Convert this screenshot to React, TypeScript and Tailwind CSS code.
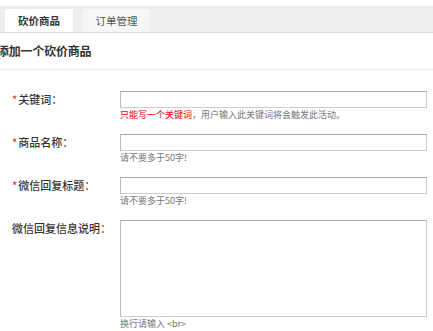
import React from "react";

const font = { fontFamily: '"Noto Sans CJK SC", "Noto Sans", sans-serif' };

function Row({
  label,
  required,
  hint,
  tall,
}: {
  label: string;
  required?: boolean;
  hint: React.ReactNode;
  tall?: boolean;
}) {
  return (
    <div className="flex mb-[13px]">
      <div className="w-[120px] shrink-0 h-[17px] flex items-center pl-[12px] text-[11px] text-[#333] font-medium">
        {required && <span className="text-[#e33] mr-[1px]">*</span>}
        {label}
      </div>
      <div className="w-[307px] flex flex-col">
        {tall ? (
          <textarea className="w-full h-[97px] border border-[#ccc] border-t-[#aaa] border-l-[#bbb] bg-white resize-none outline-none" />
        ) : (
          <input className="w-full h-[17px] border border-[#ccc] border-t-[#aaa] border-l-[#bbb] bg-white outline-none" />
        )}
        <div className="h-[12px] leading-[12px] text-[9px] text-[#777] mt-[1px] whitespace-nowrap">
          {hint}
        </div>
      </div>
    </div>
  );
}

export default function App() {
  return (
    <div className="w-[433px] h-[331px] bg-white overflow-hidden pt-[6px]" style={font}>
      <div className="h-[27px] bg-[#eee] border-b border-[#ddd] flex items-end pl-[5px] gap-[10px]">
        <div className="w-[68px] h-[23px] bg-white flex items-center justify-center text-[10.5px] font-bold text-[#333]">
          砍价商品
        </div>
        <div className="w-[67px] h-[23px] bg-[#f6f6f6] flex items-center justify-center text-[10.5px] text-[#555]">
          订单管理
        </div>
      </div>
      <div className="h-[37px] flex items-center border-b border-[#eee]">
        <span className="-ml-[3px] text-[12px] font-bold text-[#333] tracking-[-0.2px]">添加一个砍价商品</span>
      </div>
      <div className="pt-[21px]">
        <Row
          label="关键词："
          required
          hint={
            <>
              <span className="text-[#e00]">只能写一个关键词</span>，用户输入此关键词将会触发此活动。
            </>
          }
        />
        <Row label="商品名称：" required hint="请不要多于50字!" />
        <Row label="微信回复标题：" required hint="请不要多于50字!" />
        <Row label="微信回复信息说明：" tall hint="换行请输入 <br>" />
      </div>
    </div>
  );
}
